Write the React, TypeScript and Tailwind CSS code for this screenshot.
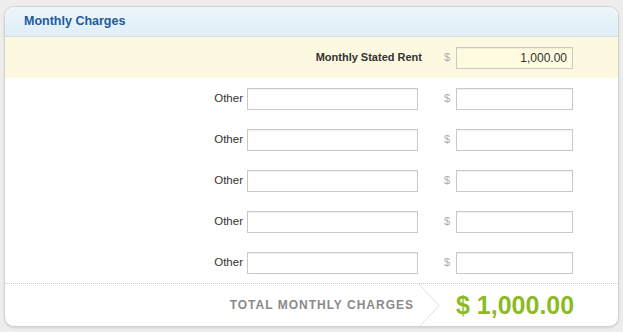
const otherRows = [0, 1, 2, 3, 4];

function MoneyInput({ value = '', tint = false }: { value?: string; tint?: boolean }) {
    return (
        <input
            readOnly
            value={value}
            className={`w-[117px] h-[22px] border border-[#c9c9c9] shadow-[inset_0_1px_1px_rgba(0,0,0,0.06)] px-[5px] text-right text-[12px] text-[#333] outline-none ${
                tint ? 'bg-[#fefbe0]' : 'bg-white'
            }`}
        />
    );
}

function Dollar() {
    return <span className="w-[38px] pr-[6px] text-right text-[11px] text-[#ababab]">$</span>;
}

export default function App() {
    return (
        <div
            className="w-[623px] h-[332px] bg-[#ededed] pt-[6px] px-[4px] pb-[5px]"
            style={{ fontFamily: '"Liberation Sans", Arial, sans-serif' }}
        >
            <div className="h-full rounded-[10px] border border-[#d2d2d2] bg-white shadow-[0_1px_2px_rgba(0,0,0,0.12)] overflow-hidden flex flex-col">
                {/* header */}
                <div className="h-[30px] shrink-0 flex items-center px-[19px] bg-gradient-to-b from-[#ecf6fb] to-[#e0eef6] border-b border-[#d4dde3]">
                    <h2 className="text-[12.5px] font-bold text-[#215a9e]">Monthly Charges</h2>
                </div>

                {/* stated rent */}
                <div className="h-[41px] shrink-0 flex items-center justify-end pr-[45px] bg-[#fdf9e1]">
                    <span className="text-[11px] font-bold text-[#333]">Monthly Stated Rent</span>
                    <span className="w-[34px] pr-[6px] text-right text-[11px] text-[#ababab]">$</span>
                    <MoneyInput value="1,000.00" tint />
                </div>

                {/* other rows */}
                <div className="flex-1 flex flex-col">
                    {otherRows.map((i) => (
                        <div key={i} className="h-[41px] flex items-center justify-end pr-[45px]">
                            <span className="text-[11.5px] text-[#333] mr-[4px]">Other</span>
                            <input
                                readOnly
                                className="w-[171px] h-[22px] border border-[#c9c9c9] shadow-[inset_0_1px_1px_rgba(0,0,0,0.06)] bg-white outline-none"
                            />
                            <Dollar />
                            <MoneyInput />
                        </div>
                    ))}
                </div>

                {/* total */}
                <div className="h-[43px] shrink-0 flex items-center justify-end pr-[45px] border-t border-dotted border-[#c9c9c9]">
                    <span className="text-[12px] font-bold tracking-[1px] text-[#8a8a8a] whitespace-nowrap">TOTAL MONTHLY CHARGES</span>
                    <svg width="42" height="43" viewBox="0 0 42 43" className="shrink-0">
                        <polyline points="5,0 25,21.5 5,43" fill="none" stroke="#dedede" strokeWidth="1" />
                    </svg>
                    <span className="w-[117px] text-[25px] leading-none font-bold text-[#8cbb1f] whitespace-nowrap">$ 1,000.00</span>
                </div>
            </div>
        </div>
    );
}
